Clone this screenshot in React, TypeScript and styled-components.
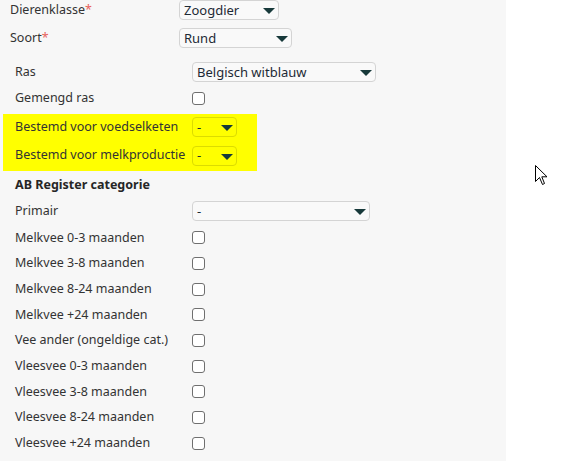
import React from "react";
import styled, { createGlobalStyle } from "styled-components";

const GlobalStyle = createGlobalStyle`
  html, body { margin: 0; padding: 0; background: #ffffff; }
  body { font-family: "Noto Sans", "Open Sans", sans-serif; font-size: 12.5px; color: #333; }
`;

const Page = styled.div`
  position: relative;
  width: 570px;
  height: 461px;
  overflow: hidden;
  background: #ffffff;
`;

const Panel = styled.div`
  width: 506px;
  height: 461px;
  background: #f7f7f7;
  display: flex;
  flex-direction: column;
`;

const Row = styled.div<{ $h: number; $label: number }>`
  display: grid;
  grid-template-columns: ${(p) => p.$label}px 1fr;
  align-items: center;
  height: ${(p) => p.$h}px;
`;

const Top = styled.div`
  padding-left: 10px;
  display: flex;
  flex-direction: column;
`;

const Section = styled.div`
  padding-left: 15px;
  display: flex;
  flex-direction: column;
`;

const Highlight = styled.div`
  margin: 6px 0 0 -12px;
  padding-left: 12px;
  width: 242px;
  background: #ffff00;
  display: flex;
  flex-direction: column;
`;

const Label = styled.span`
  color: #333;
  white-space: nowrap;
  line-height: 1;
`;

const Required = styled.span`
  color: #e8625c;
`;

const Heading = styled.div`
  font-weight: 700;
  color: #262626;
  height: 26px;
  display: flex;
  align-items: center;
`;

const Select = styled.div<{ $w: number; $hl?: boolean }>`
  width: ${(p) => p.$w}px;
  height: 20px;
  box-sizing: border-box;
  border: 1px solid ${(p) => (p.$hl ? "#dcdc00" : "#d4d4d4")};
  border-radius: 4px;
  background: ${(p) => (p.$hl ? "#ffff00" : "#f9f9f9")};
  display: flex;
  align-items: center;
  justify-content: space-between;
  padding: 0 3px 0 4px;
  color: #1d2a36;
  font-size: 13px;
  line-height: 1;
`;

const Arrow = styled.span`
  width: 0;
  height: 0;
  border-left: 6px solid transparent;
  border-right: 6px solid transparent;
  border-top: 6px solid #17393a;
  margin-top: 2px;
`;

const Check = styled.span`
  width: 13px;
  height: 13px;
  box-sizing: border-box;
  border: 1px solid #6f6f6f;
  border-radius: 3px;
  background: #ffffff;
`;

const Cursor = styled.svg`
  position: absolute;
  left: 535px;
  top: 165px;
`;

const Dropdown = ({ value, w, hl }: { value: string; w: number; hl?: boolean }) => (
  <Select $w={w} $hl={hl}>
    <span>{value}</span>
    <Arrow />
  </Select>
);

const categories = [
  "Melkvee 0-3 maanden",
  "Melkvee 3-8 maanden",
  "Melkvee 8-24 maanden",
  "Melkvee +24 maanden",
  "Vee ander (ongeldige cat.)",
  "Vleesvee 0-3 maanden",
  "Vleesvee 3-8 maanden",
  "Vleesvee 8-24 maanden",
  "Vleesvee +24 maanden",
];

export default function App() {
  return (
    <Page>
      <GlobalStyle />
      <Panel>
        <Top>
          <Row $h={20} $label={169}>
            <Label>
              Dierenklasse<Required>*</Required>
            </Label>
            <Dropdown value="Zoogdier" w={100} />
          </Row>
          <Row $h={36} $label={169}>
            <Label>
              Soort<Required>*</Required>
            </Label>
            <Dropdown value="Rund" w={113} />
          </Row>
        </Top>
        <Section>
          <Row $h={32} $label={177}>
            <Label>Ras</Label>
            <Dropdown value="Belgisch witblauw" w={184} />
          </Row>
          <Row $h={20} $label={177}>
            <Label>Gemengd ras</Label>
            <Check />
          </Row>
          <Highlight>
            <Row $h={26} $label={177}>
              <Label>Bestemd voor voedselketen</Label>
              <Dropdown value="-" w={45} hl />
            </Row>
            <Row $h={31} $label={177}>
              <Label>Bestemd voor melkproductie</Label>
              <Dropdown value="-" w={45} hl />
            </Row>
          </Highlight>
          <Heading>AB Register categorie</Heading>
          <Row $h={28} $label={177}>
            <Label>Primair</Label>
            <Dropdown value="-" w={178} />
          </Row>
          {categories.map((c) => (
            <Row key={c} $h={25.7} $label={177}>
              <Label>{c}</Label>
              <Check />
            </Row>
          ))}
        </Section>
      </Panel>
      <Cursor width="13" height="21" viewBox="0 0 13 21">
        <path
          d="M0.5 0.5 L0.5 16.5 L4.5 12.5 L7.5 19.5 L9.5 18.5 L6.8 11.8 L12 11.8 Z"
          fill="#ffffff"
          stroke="#000000"
          strokeWidth="1"
          strokeLinejoin="miter"
        />
      </Cursor>
    </Page>
  );
}
